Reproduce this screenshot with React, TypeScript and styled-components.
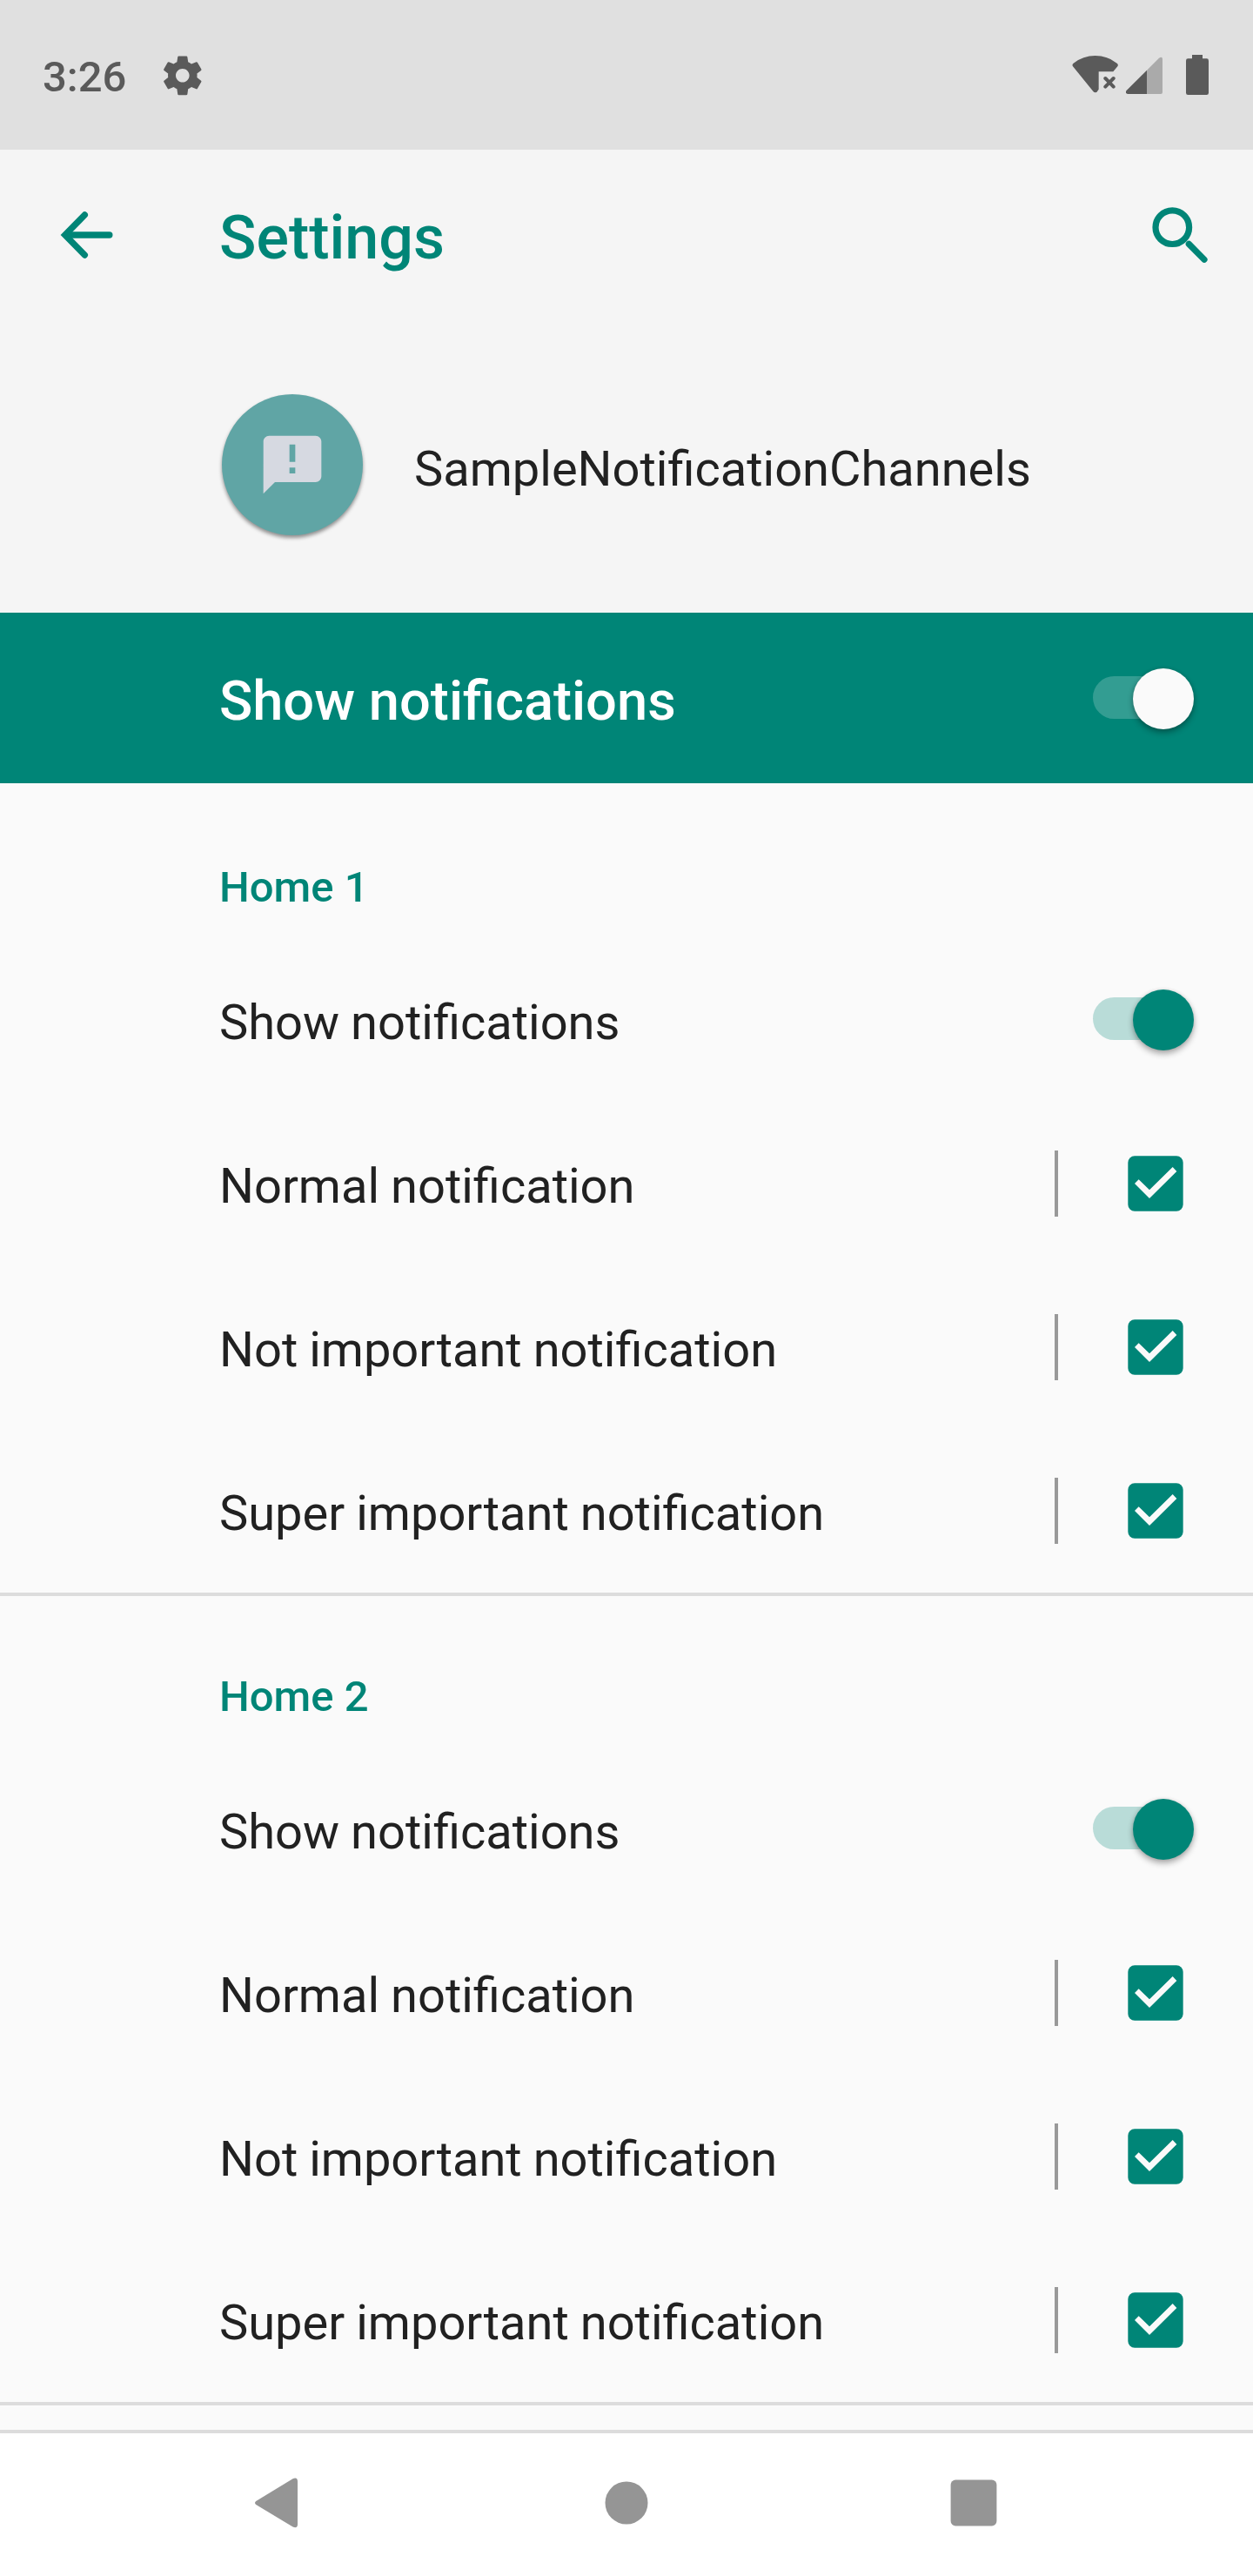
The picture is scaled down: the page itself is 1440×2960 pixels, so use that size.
import React from "react";
import styled, { createGlobalStyle } from "styled-components";

const teal = "#008577";
const statusInk = "#5a5a5a";
const navInk = "#959595";

const GlobalStyle = createGlobalStyle`
  *, *::before, *::after { box-sizing: border-box; }
  body { margin: 0; background: #fafafa; }
  svg { display: block; flex: none; }
`;

const Screen = styled.div`
  display: flex;
  flex-direction: column;
  width: 1440px;
  height: 2960px;
  overflow: hidden;
  background: #fafafa;
  color: #212121;
  font-family: Roboto, "Noto Sans", sans-serif;
  font-size: 56px;
  line-height: 66px;
  white-space: nowrap;
`;

const StatusBar = styled.header`
  display: flex;
  align-items: flex-start;
  height: 172px;
  flex: none;
  padding: 0 51px 0 49px;
  background: #e0e0e0;
  color: ${statusInk};
`;

const Clock = styled.span`
  width: 133.5px;
  padding-top: 59px;
  font-size: 49px;
  font-weight: 500;
  line-height: 60px;
`;

const GearSlot = styled.div`
  padding-top: 59.5px;
`;

const StatusIcons = styled.div`
  display: flex;
  align-items: flex-start;
  margin-left: auto;
  padding-top: 62px;
`;

const BatterySlot = styled.div`
  margin-left: 25px;
`;

const Toolbar = styled.div`
  display: flex;
  align-items: center;
  height: 196px;
  flex: none;
  padding: 0 51px 0 68px;
  background: #f5f5f5;
`;

const ToolbarTitle = styled.h1`
  flex: 1;
  margin: 0 0 0 120px;
  padding-top: 6px;
  color: ${teal};
  font-size: 70px;
  font-weight: 500;
  line-height: 84px;
`;

const AppHeader = styled.div`
  display: flex;
  align-items: center;
  height: 336px;
  flex: none;
  padding: 0 0 4px 255px;
  background: #f5f5f5;
`;

const AppIcon = styled.div`
  display: flex;
  align-items: center;
  justify-content: center;
  width: 162px;
  height: 162px;
  border-radius: 50%;
  background: #60a5a5;
  box-shadow: 0 3px 4px rgba(0, 0, 0, 0.42);
`;

const AppName = styled.span`
  margin-left: 59px;
  padding-top: 10px;
`;

const MainSwitchBar = styled.div`
  display: flex;
  align-items: center;
  justify-content: space-between;
  height: 196px;
  flex: none;
  padding: 0 68px 0 252px;
  background: ${teal};
  color: #fff;
`;

const MainLabel = styled.span`
  padding-top: 5px;
  font-size: 63.2px;
  font-weight: 500;
  line-height: 74px;
`;

const Content = styled.main`
  flex: 1;
  overflow: hidden;
`;

const Section = styled.section<{ $divided: boolean }>`
  height: 930px;
  border-top: ${(p) => (p.$divided ? "4px solid #dcdcdc" : "0")};
`;

const SectionTitle = styled.h2<{ $divided: boolean }>`
  height: ${(p) => (p.$divided ? 174 : 178)}px;
  margin: 0;
  padding: ${(p) => (p.$divided ? 86 : 90)}px 0 0 252px;
  color: ${teal};
  font-size: 49px;
  font-weight: 500;
  line-height: 60px;
`;

const Row = styled.div`
  display: flex;
  align-items: center;
  height: 188px;
  padding: 0 68px 0 252px;
`;

const Label = styled.span`
  flex: 1;
  padding-top: 6px;
  word-spacing: -0.9px;
`;

const Track = styled.div<{ $inverse?: boolean }>`
  display: flex;
  align-items: center;
  justify-content: flex-end;
  width: 112px;
  height: 49px;
  margin: 0 4px ${(p) => (p.$inverse ? 1 : 3)}px 0;
  border-radius: 25px;
  background: ${(p) => (p.$inverse ? "#339d92" : "#b9dcd8")};
`;

const Thumb = styled.div<{ $inverse?: boolean }>`
  flex: none;
  width: 70px;
  height: 70px;
  margin: 2px -4px 0 0;
  border-radius: 50%;
  background: ${(p) => (p.$inverse ? "#fafafa" : teal)};
  box-shadow: 0 4px 7px rgba(0, 0, 0, 0.32), 0 0 4px rgba(0, 0, 0, 0.1);
`;

const Separator = styled.div`
  width: 4px;
  height: 76px;
  margin-right: 80px;
  background: #999;
`;

const CheckSlot = styled.div`
  margin-right: 12px;
`;

const NavBar = styled.nav`
  display: flex;
  align-items: center;
  height: 168px;
  flex: none;
  padding: 0 0 4px 292px;
  border-top: 4px solid #dcdcdc;
  background: #fff;
`;

const NavHome = styled.div`
  margin: 0 347px 0 351.5px;
`;

const Toggle = ({ inverse }: { inverse?: boolean }) => (
  <Track $inverse={inverse}>
    <Thumb $inverse={inverse} />
  </Track>
);

const Checkbox = () => (
  <svg width="64" height="64" viewBox="0 0 192 192">
    <rect x="1" y="1" width="190" height="190" rx="23" fill={teal} />
    <path d="M24 96l14-14 37 36 80-79 14 15-94 93z" fill="#fafafa" />
  </svg>
);

const Gear = () => (
  <svg width="53.6" height="53.6" viewBox="0 0 24 24" fill={statusInk}>
    <path d="M19.43 12.98c.04-.32.07-.64.07-.98s-.03-.66-.07-.98l2.11-1.65c.19-.15.24-.42.12-.64l-2-3.46c-.12-.22-.39-.3-.61-.22l-2.49 1c-.52-.4-1.08-.73-1.69-.98l-.38-2.65C14.46 2.18 14.25 2 14 2h-4c-.25 0-.46.18-.49.42l-.38 2.65c-.61.25-1.17.59-1.69.98l-2.49-1c-.23-.09-.49 0-.61.22l-2 3.46c-.13.22-.07.49.12.64l2.11 1.65c-.04.32-.07.65-.07.98s.03.66.07.98l-2.11 1.65c-.19.15-.24.42-.12.64l2 3.46c.12.22.39.3.61.22l2.49-1c.52.4 1.08.73 1.69.98l.38 2.65c.03.24.24.42.49.42h4c.25 0 .46-.18.49-.42l.38-2.65c.61-.25 1.17-.59 1.69-.98l2.49 1c.23.09.49 0 .61-.22l2-3.46c.12-.22.07-.49-.12-.64l-2.11-1.65zM12 15.5c-1.93 0-3.5-1.57-3.5-3.5s1.57-3.5 3.5-3.5 3.5 1.57 3.5 3.5-1.57 3.5-3.5 3.5z" />
  </svg>
);

const Wifi = () => (
  <svg width="62" height="48" viewBox="156 186 186 144">
    <path
      d="M159 229Q155 222 161 218Q194 192 236 192Q278 192 311 218Q317 222 313 229L298 247H248V308Q242 319 236 319Q232 319 229 315Z"
      fill={statusInk}
    />
    <path d="M271 270l28 29M299 270l-28 29" stroke={statusInk} strokeWidth="12" strokeLinecap="round" />
  </svg>
);

const Signal = () => (
  <svg width="44" height="48" viewBox="342 186 132 144">
    <path d="M414 242L456 200Q468 193 468 204V318Q468 324 462 324H414Z" fill="#aaa" />
    <path d="M414 242V324H348Q339 322 343 313Z" fill={statusInk} />
  </svg>
);

const Battery = () => (
  <svg width="26" height="48" viewBox="549 186 78 144" fill={statusInk}>
    <rect x="549" y="202" width="78" height="125" rx="7" />
    <rect x="570" y="189" width="36" height="16" />
  </svg>
);

const BackArrow = () => (
  <svg width="64" height="60" viewBox="68 240 64 60" fill="none" stroke={teal} strokeWidth="7.4" strokeLinecap="round">
    <path d="M97.3 247L74.8 270L97.3 293" strokeLinejoin="miter" />
    <path d="M76 270H125.8" />
  </svg>
);

const Search = () => (
  <svg width="68" height="68" viewBox="1321 236 68 68" fill="none" stroke={teal} strokeWidth="7.2" strokeLinecap="round">
    <circle cx="1347.3" cy="261.2" r="19.3" />
    <path d="M1366.3 280.4L1384 298.2" />
  </svg>
);

const Feedback = () => (
  <svg width="80" height="80" viewBox="0 0 24 24" fill="#d6d9e1">
    <path d="M20 2H4c-1.1 0-1.99.9-1.99 2L2 22l4-4h14c1.1 0 2-.9 2-2V4c0-1.1-.9-2-2-2zm-7 13h-2v-2h2v2zm0-4h-2V5h2v6z" />
  </svg>
);

const homes = ["Home 1", "Home 2"];
const channels = ["Normal notification", "Not important notification", "Super important notification"];

export default function App() {
  return (
    <>
      <GlobalStyle />
      <Screen>
        <StatusBar>
          <Clock>3:26</Clock>
          <GearSlot>
            <Gear />
          </GearSlot>
          <StatusIcons>
            <Wifi />
            <Signal />
            <BatterySlot>
              <Battery />
            </BatterySlot>
          </StatusIcons>
        </StatusBar>
        <Toolbar>
          <BackArrow />
          <ToolbarTitle>Settings</ToolbarTitle>
          <Search />
        </Toolbar>
        <AppHeader>
          <AppIcon>
            <Feedback />
          </AppIcon>
          <AppName>SampleNotificationChannels</AppName>
        </AppHeader>
        <MainSwitchBar>
          <MainLabel>Show notifications</MainLabel>
          <Toggle inverse />
        </MainSwitchBar>
        <Content>
          {homes.map((home, i) => (
            <Section key={home} $divided={i > 0}>
              <SectionTitle $divided={i > 0}>{home}</SectionTitle>
              <Row>
                <Label>Show notifications</Label>
                <Toggle />
              </Row>
              {channels.map((channel) => (
                <Row key={channel}>
                  <Label>{channel}</Label>
                  <Separator />
                  <CheckSlot>
                    <Checkbox />
                  </CheckSlot>
                </Row>
              ))}
            </Section>
          ))}
          <Section $divided />
        </Content>
        <NavBar>
          <svg width="51" height="58" viewBox="292 2847 51 58" fill={navInk}>
            <path d="M294.2 2874L336.5 2848.3Q342 2846 342 2851.5V2900.5Q342 2906 336.5 2903.5L294.2 2878Q291.8 2876 294.2 2874Z" />
          </svg>
          <NavHome>
            <svg width="50" height="50" viewBox="0 0 50 50" fill={navInk}>
              <circle cx="25" cy="25" r="24.5" />
            </svg>
          </NavHome>
          <svg width="54" height="54" viewBox="0 0 54 54" fill={navInk}>
            <rect x="0.6" y="0.6" width="52.8" height="52.8" rx="5.5" />
          </svg>
        </NavBar>
      </Screen>
    </>
  );
}
